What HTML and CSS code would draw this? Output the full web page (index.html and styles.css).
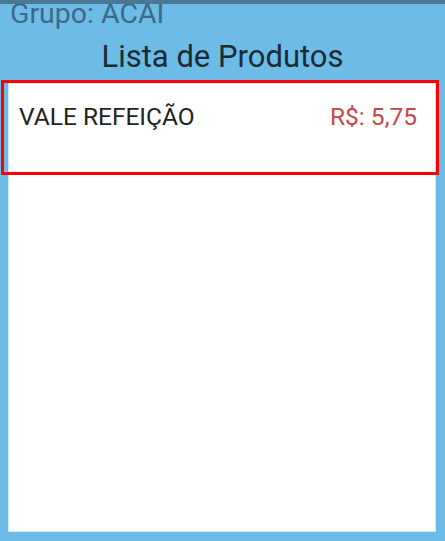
FILE: index.html
```html
<!DOCTYPE html>
<html lang="pt-BR">
<head>
  <meta charset="UTF-8">
  <title>Lista de Produtos</title>
  <link rel="stylesheet" href="styles.css">
</head>
<body>
<!-- Status strip -->
<div class="top-strip"></div>

<!-- Header -->
<div class="group-label">Grupo: ACAI</div>
<h1 class="title">Lista de Produtos</h1>

<!-- Product list -->
<div class="product-list">
  <div class="product-row">
    <span class="product-name">VALE REFEIÇÃO</span>
    <span class="product-price">R$: 5,75</span>
  </div>
</div>

<!-- Selection highlight -->
<div class="highlight"></div>
</body>
</html>
```

FILE: styles.css
```css
/* Basic reset and body styling */
html, body {
  height: 100%;
}
body {
  margin: 0;
  padding: 0;
  font-family: Roboto, "Noto Sans", sans-serif;
  background-color: #6dbce8;
  display: flex;
  flex-direction: column;
  position: relative;
  overflow: hidden;
}

/* Top strip */
.top-strip {
  position: relative;
  z-index: 1;
  height: 4px;
  background-color: #4a7894;
}

/* Header texts */
.group-label {
  margin: -6px 0 0 10px;
  font-size: 28.5px;
  line-height: 32px;
  color: #3d6985;
}
.title {
  margin: 9px 0 0;
  text-align: center;
  font-size: 31px;
  font-weight: normal;
  line-height: 36px;
  color: #1e2a31;
}

/* Product list panel */
.product-list {
  flex: 1;
  margin: 8px 9px 9px 8px;
  background-color: #fff;
  border: 1px solid #cfe9f7;
}
.product-row {
  display: flex;
  justify-content: space-between;
  align-items: baseline;
  padding: 18px 18px 0 10px;
  font-size: 24.5px;
  line-height: 29px;
}
.product-name {
  color: #222;
}
.product-price {
  color: #c94646;
}

/* Red selection box drawn over the first row */
.highlight {
  position: absolute;
  top: 80px;
  left: 1px;
  width: 432px;
  height: 89px;
  border: 3px solid #ff0000;
}
```
